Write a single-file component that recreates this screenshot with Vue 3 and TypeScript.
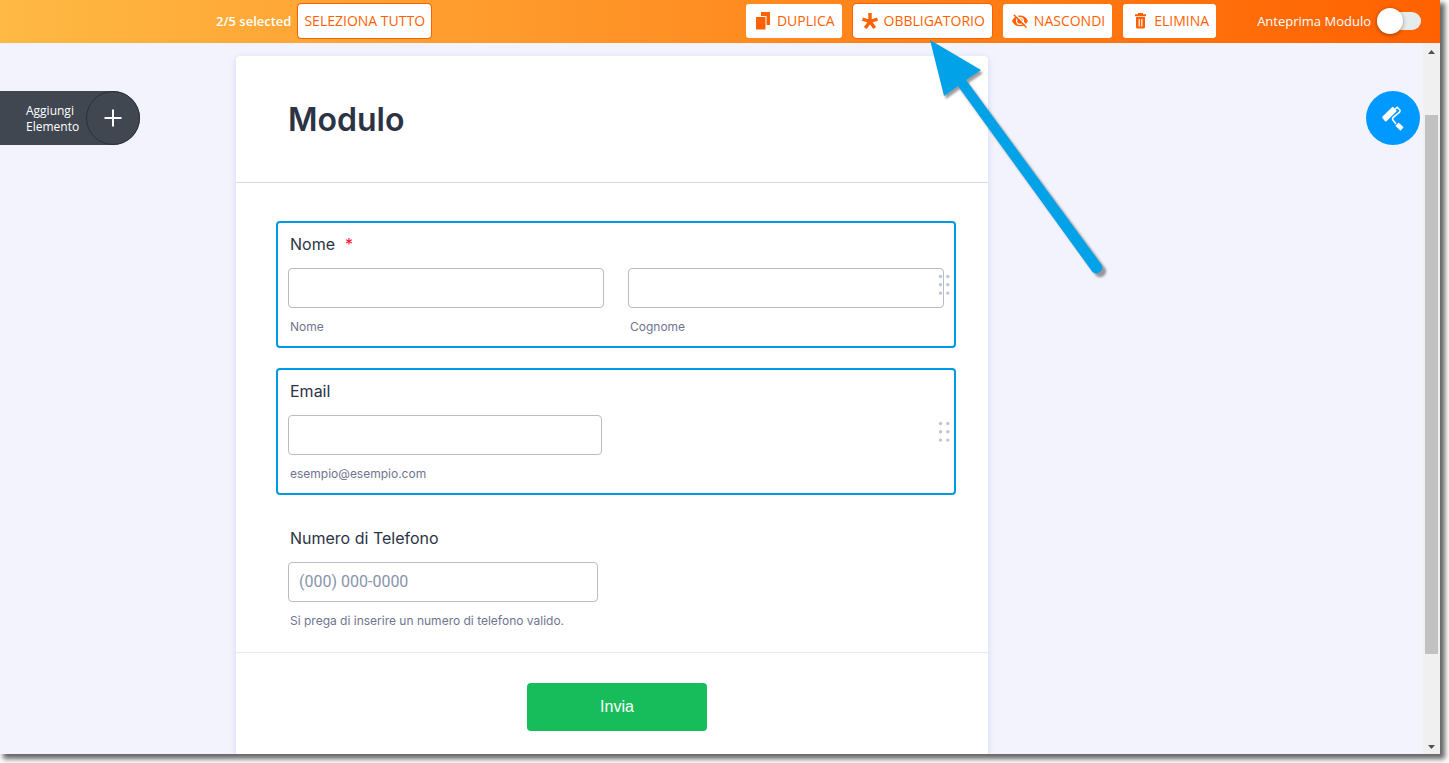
<script setup lang="ts">
import { ref } from 'vue'

interface Input {
  id: string
  caption: string
  placeholder?: string
  type: string
}

interface Field {
  id: string
  label: string
  required: boolean
  selected: boolean
  size: string
  inputs: Input[]
}

const preview = ref(false)

const fields = ref<Field[]>([
  {
    id: 'name',
    label: 'Nome',
    required: true,
    selected: true,
    size: 'pair',
    inputs: [
      { id: 'first-name', caption: 'Nome', type: 'text' },
      { id: 'last-name', caption: 'Cognome', type: 'text' },
    ],
  },
  {
    id: 'email',
    label: 'Email',
    required: false,
    selected: true,
    size: 'medium',
    inputs: [{ id: 'email-input', caption: 'esempio@esempio.com', type: 'email' }],
  },
  {
    id: 'phone',
    label: 'Numero di Telefono',
    required: false,
    selected: false,
    size: 'small',
    inputs: [
      {
        id: 'phone-input',
        caption: 'Si prega di inserire un numero di telefono valido.',
        placeholder: '(000) 000-0000',
        type: 'tel',
      },
    ],
  },
])
</script>

<template>
  <div class="stage">
    <div class="window">
      <header class="toolbar">
        <div class="selection">
          <strong class="count">2/5 selected</strong>
          <button type="button" class="tool outlined text-only">SELEZIONA TUTTO</button>
        </div>
        <div class="actions">
          <button type="button" class="tool">
            <svg width="16" height="18" viewBox="0 0 16 18" aria-hidden="true">
              <path d="M6 0h9v13h-3.500V4H6z" fill="currentColor" />
              <path d="M1 5h9.500v12.500H1z" fill="currentColor" />
            </svg>
            DUPLICA
          </button>
          <button type="button" class="tool outlined">
            <svg width="16" height="16" viewBox="0 0 16 16" aria-hidden="true">
              <path d="M8 8.500V0M8 8.500L.5 6M8 8.500L15.500 6M8 8.500L3.300 15M8 8.500L12.700 15" fill="none" stroke="currentColor" stroke-width="3.400" />
            </svg>
            OBBLIGATORIO
          </button>
          <button type="button" class="tool">
            <svg width="16" height="14" viewBox="0 0 16 14" aria-hidden="true">
              <path d="M0 7C1.800 3.300 4.700 1.600 8 1.600S14.200 3.300 16 7C14.200 10.600 11.300 12.300 8 12.300S1.800 10.600 0 7z" fill="currentColor" />
              <circle cx="8" cy="7" r="3.400" fill="none" stroke="#fff" stroke-width="1.300" />
              <path d="M3 0L15 12" stroke="#fff" stroke-width="1.500" />
              <path d="M1.800 .8L14.500 13.500" stroke="currentColor" stroke-width="1.500" />
            </svg>
            NASCONDI
          </button>
          <button type="button" class="tool">
            <svg width="16" height="16" viewBox="-3 0 16 16" aria-hidden="true">
              <path d="M3 0h5v1.300h3v2H0v-2h3z" fill="currentColor" />
              <path d="M1 4h9v10q0 1.500-1.500 1.500h-6Q1 15.500 1 14z" fill="currentColor" />
              <path d="M4.200 6v7.500M6.800 6v7.500" stroke="#fff" stroke-width="1.200" />
            </svg>
            ELIMINA
          </button>
        </div>
        <label class="preview">
          Anteprima Modulo
          <input v-model="preview" type="checkbox" class="switch" />
        </label>
      </header>

      <div class="workspace">
        <main class="canvas">
          <form class="sheet" @submit.prevent>
            <div class="heading">
              <h1>Modulo</h1>
            </div>
            <div class="fields">
              <section
                v-for="field in fields"
                :key="field.id"
                class="field"
                :class="[field.size, { selected: field.selected }]"
              >
                <label class="title" :for="field.inputs[0].id">
                  {{ field.label }}<span v-if="field.required" class="star">*</span>
                </label>
                <div class="row">
                  <div v-for="input in field.inputs" :key="input.id" class="cell">
                    <input
                      :id="input.id"
                      class="box"
                      :type="input.type"
                      :placeholder="input.placeholder"
                    />
                    <label class="caption" :for="input.id">{{ input.caption }}</label>
                  </div>
                </div>
                <svg v-if="field.selected" class="grip" width="12" height="22" viewBox="0 0 12 22" aria-hidden="true">
                  <g fill="#c0c4d8">
                    <circle cx="2.500" cy="2.500" r="1.700" />
                    <circle cx="9.800" cy="2.500" r="1.700" />
                    <circle cx="2.500" cy="10.800" r="1.700" />
                    <circle cx="9.800" cy="10.800" r="1.700" />
                    <circle cx="2.500" cy="19.100" r="1.700" />
                    <circle cx="9.800" cy="19.100" r="1.700" />
                  </g>
                </svg>
              </section>
            </div>
            <div class="footer">
              <button type="submit" class="submit">Invia</button>
            </div>
          </form>
        </main>

        <div class="scrollbar" aria-hidden="true">
          <svg width="7" height="4" viewBox="0 0 7 4"><path d="M0 4L3.500 0L7 4z" fill="#505050" /></svg>
          <div class="track"><div class="thumb"></div></div>
          <svg width="7" height="4" viewBox="0 0 7 4"><path d="M0 0L3.500 4L7 0z" fill="#505050" /></svg>
        </div>

        <button type="button" class="add">
          <span class="add-text">Aggiungi Elemento</span>
          <span class="add-icon">
            <svg width="18" height="18" viewBox="0 0 18 18" aria-hidden="true">
              <path d="M9 .5v17M.5 9h17" stroke="#fff" stroke-width="2" />
            </svg>
          </span>
        </button>

        <button type="button" class="design" aria-label="Designer">
          <svg width="26" height="28" viewBox="0 0 26 28" aria-hidden="true">
            <path d="M3.200 13.300L12.700 3.900L15.600 6.700L5.800 16.500z" fill="#fff" stroke="#fff" stroke-width="2" stroke-linejoin="round" />
            <path d="M15 5L17.200 3.300L20 6.200Q20.300 7.300 19.500 8.100L13 13.600Q12 14.800 12.900 16L16 20" fill="none" stroke="#fff" stroke-width="1.500" />
            <path d="M17 20.200L22 25" stroke="#fff" stroke-width="4.600" />
          </svg>
        </button>
      </div>

      <svg class="pointer" width="186" height="246" viewBox="0 0 186 246" aria-hidden="true">
        <g class="pointer-shadow">
          <path d="M6 5L56 35L41.500 45L178.500 230.500A6 6 0 0 1 168.500 237L33 51L19 61z" />
        </g>
        <path d="M6 5L57 35L42 45L178 230.500A6 6 0 0 1 168.500 237L34 51L20 61z" fill="#02a2e8" />
      </svg>
    </div>
  </div>
</template>

<style>
body {
  background: #fff;
}
</style>

<style scoped>
* {
  box-sizing: border-box;
}

button,
input {
  font: inherit;
}

.stage {
  display: flex;
  height: 100vh;
  padding: 0 9px 9px 0;
  overflow: hidden;
  font-family: Inter, "Liberation Sans", sans-serif;
}

.window {
  position: relative;
  display: flex;
  flex: 1;
  flex-direction: column;
  min-width: 0;
  box-shadow: 4px 4px 5px 1px rgba(0, 0, 0, 0.6);
}

.toolbar {
  display: flex;
  flex: none;
  align-items: center;
  height: 43px;
  padding: 0 19px 2px 216px;
  background: linear-gradient(90deg, #ffb944, #ff6100);
  color: #fff;
  font: 13px/18px "Open Sans", "Noto Sans", sans-serif;
}

.selection {
  display: flex;
  align-items: center;
  gap: 6px;
}

.count {
  font-weight: 600;
}

.actions {
  display: flex;
  gap: 9px;
  margin-left: auto;
}

.tool {
  display: flex;
  align-items: center;
  gap: 6px;
  height: 36px;
  padding: 0 7px 0 9px;
  border: 1px solid transparent;
  border-radius: 4px;
  background: #fff padding-box;
  color: #ff6100;
  font-size: 14px;
  white-space: nowrap;
}

.tool.outlined {
  border-color: #ff6100;
}

.tool.text-only {
  padding: 0 6px;
}

.preview {
  display: flex;
  align-items: center;
  gap: 6px;
  margin-left: 40px;
}

.switch {
  display: flex;
  align-items: center;
  width: 44px;
  height: 18px;
  margin: 0;
  border-radius: 9px;
  background: #e6ecec;
  appearance: none;
}

.switch::before {
  width: 26px;
  height: 26px;
  flex: none;
  border-radius: 50%;
  background: #fff;
  box-shadow: 0 1px 4px rgba(0, 0, 0, 0.4);
  content: "";
}

.switch:checked {
  justify-content: flex-end;
}

.workspace {
  position: relative;
  display: flex;
  flex: 1;
  min-height: 0;
  background: #f3f3fe;
}

.canvas {
  display: flex;
  flex: 1;
  justify-content: center;
  padding: 13px 199px 0 0;
  overflow: hidden;
}

.sheet {
  width: 752px;
  min-height: 100%;
  border-radius: 4px 4px 0 0;
  background: #fff;
  box-shadow: 0 2px 6px rgba(84, 95, 180, 0.2);
}

.heading {
  padding: 44px 52px 42px;
  border-bottom: 1px solid #d7d8e1;
}

h1 {
  margin: 0;
  color: #2c3345;
  font-size: 32px;
  font-weight: 600;
  line-height: 40px;
}

.fields {
  display: flex;
  flex-direction: column;
  gap: 20px;
  padding: 38px 32px 10px 40px;
}

.field {
  position: relative;
  padding: 10px;
  border: 2px solid transparent;
  border-radius: 4px;
}

.field.selected {
  border-color: #0099e5;
}

.title {
  display: block;
  padding: 0 2px;
  margin-bottom: 13px;
  color: #2c3345;
  font-size: 16px;
  line-height: 22px;
}

.star {
  margin-left: 10px;
  color: #ff0a2f;
}

.row {
  display: flex;
  gap: 24px;
}

.cell {
  flex: 0 0 316px;
}

.medium .cell {
  flex-basis: 314px;
}

.small .cell {
  flex-basis: 310px;
}

.box {
  display: block;
  width: 100%;
  height: 40px;
  padding: 0 10px 2px;
  border: 1px solid #b8bbc9;
  border-radius: 4px;
  background: #fff;
  color: #2c3345;
  font-size: 16px;
}

.box::placeholder {
  color: #8894ab;
  font-family: Roboto, "Liberation Sans", sans-serif;
}

.caption {
  display: block;
  padding: 0 2px;
  margin-top: 10px;
  color: #6f7590;
  font-size: 12px;
  line-height: 18px;
  white-space: nowrap;
}

.grip {
  position: absolute;
  top: 51px;
  right: 4px;
}

.footer {
  display: flex;
  justify-content: center;
  padding: 30px 32px 40px 42px;
  border-top: 1px solid #e6e6f4;
}

.submit {
  width: 180px;
  height: 48px;
  border: 0;
  border-radius: 4px;
  background: #18bd5b;
  color: #fff;
  font-family: "Liberation Sans", Arial, sans-serif;
  font-size: 16px;
}

.scrollbar {
  display: flex;
  flex: none;
  flex-direction: column;
  align-items: center;
  gap: 6px;
  width: 17px;
  padding: 7px 0 5px;
  background: #f0f0f0;
}

.scrollbar svg {
  flex: none;
}

.track {
  flex: 1;
  width: 13px;
  padding-top: 55px;
}

.thumb {
  height: 88%;
  max-height: 539px;
  background: #c1c1c1;
}

.add {
  position: absolute;
  top: 48px;
  left: 0;
  display: flex;
  align-items: center;
  justify-content: flex-end;
  gap: 6px;
  width: 140px;
  height: 54px;
  padding: 0;
  border: 0;
  border-radius: 0 27px 27px 0;
  background: #404751;
  color: #fff;
  font: 12px/16px "Open Sans", "Noto Sans", sans-serif;
  text-align: left;
}

.add-text {
  width: 54px;
  padding-top: 2px;
  white-space: normal;
}

.add-icon {
  display: flex;
  flex: none;
  align-items: center;
  justify-content: center;
  width: 54px;
  height: 54px;
  border: 1px solid #2b303b;
  border-radius: 50%;
}

.design {
  position: absolute;
  top: 48px;
  right: 20px;
  display: flex;
  align-items: center;
  justify-content: center;
  width: 54px;
  height: 54px;
  padding: 0;
  border: 0;
  border-radius: 50%;
  background: #0099ff;
}

.pointer {
  position: absolute;
  top: 35px;
  left: 924px;
  overflow: visible;
  pointer-events: none;
}

.pointer-shadow {
  fill: rgba(60, 60, 60, 0.5);
  filter: blur(1px);
  transform: translate(3px, 3px);
}
</style>
